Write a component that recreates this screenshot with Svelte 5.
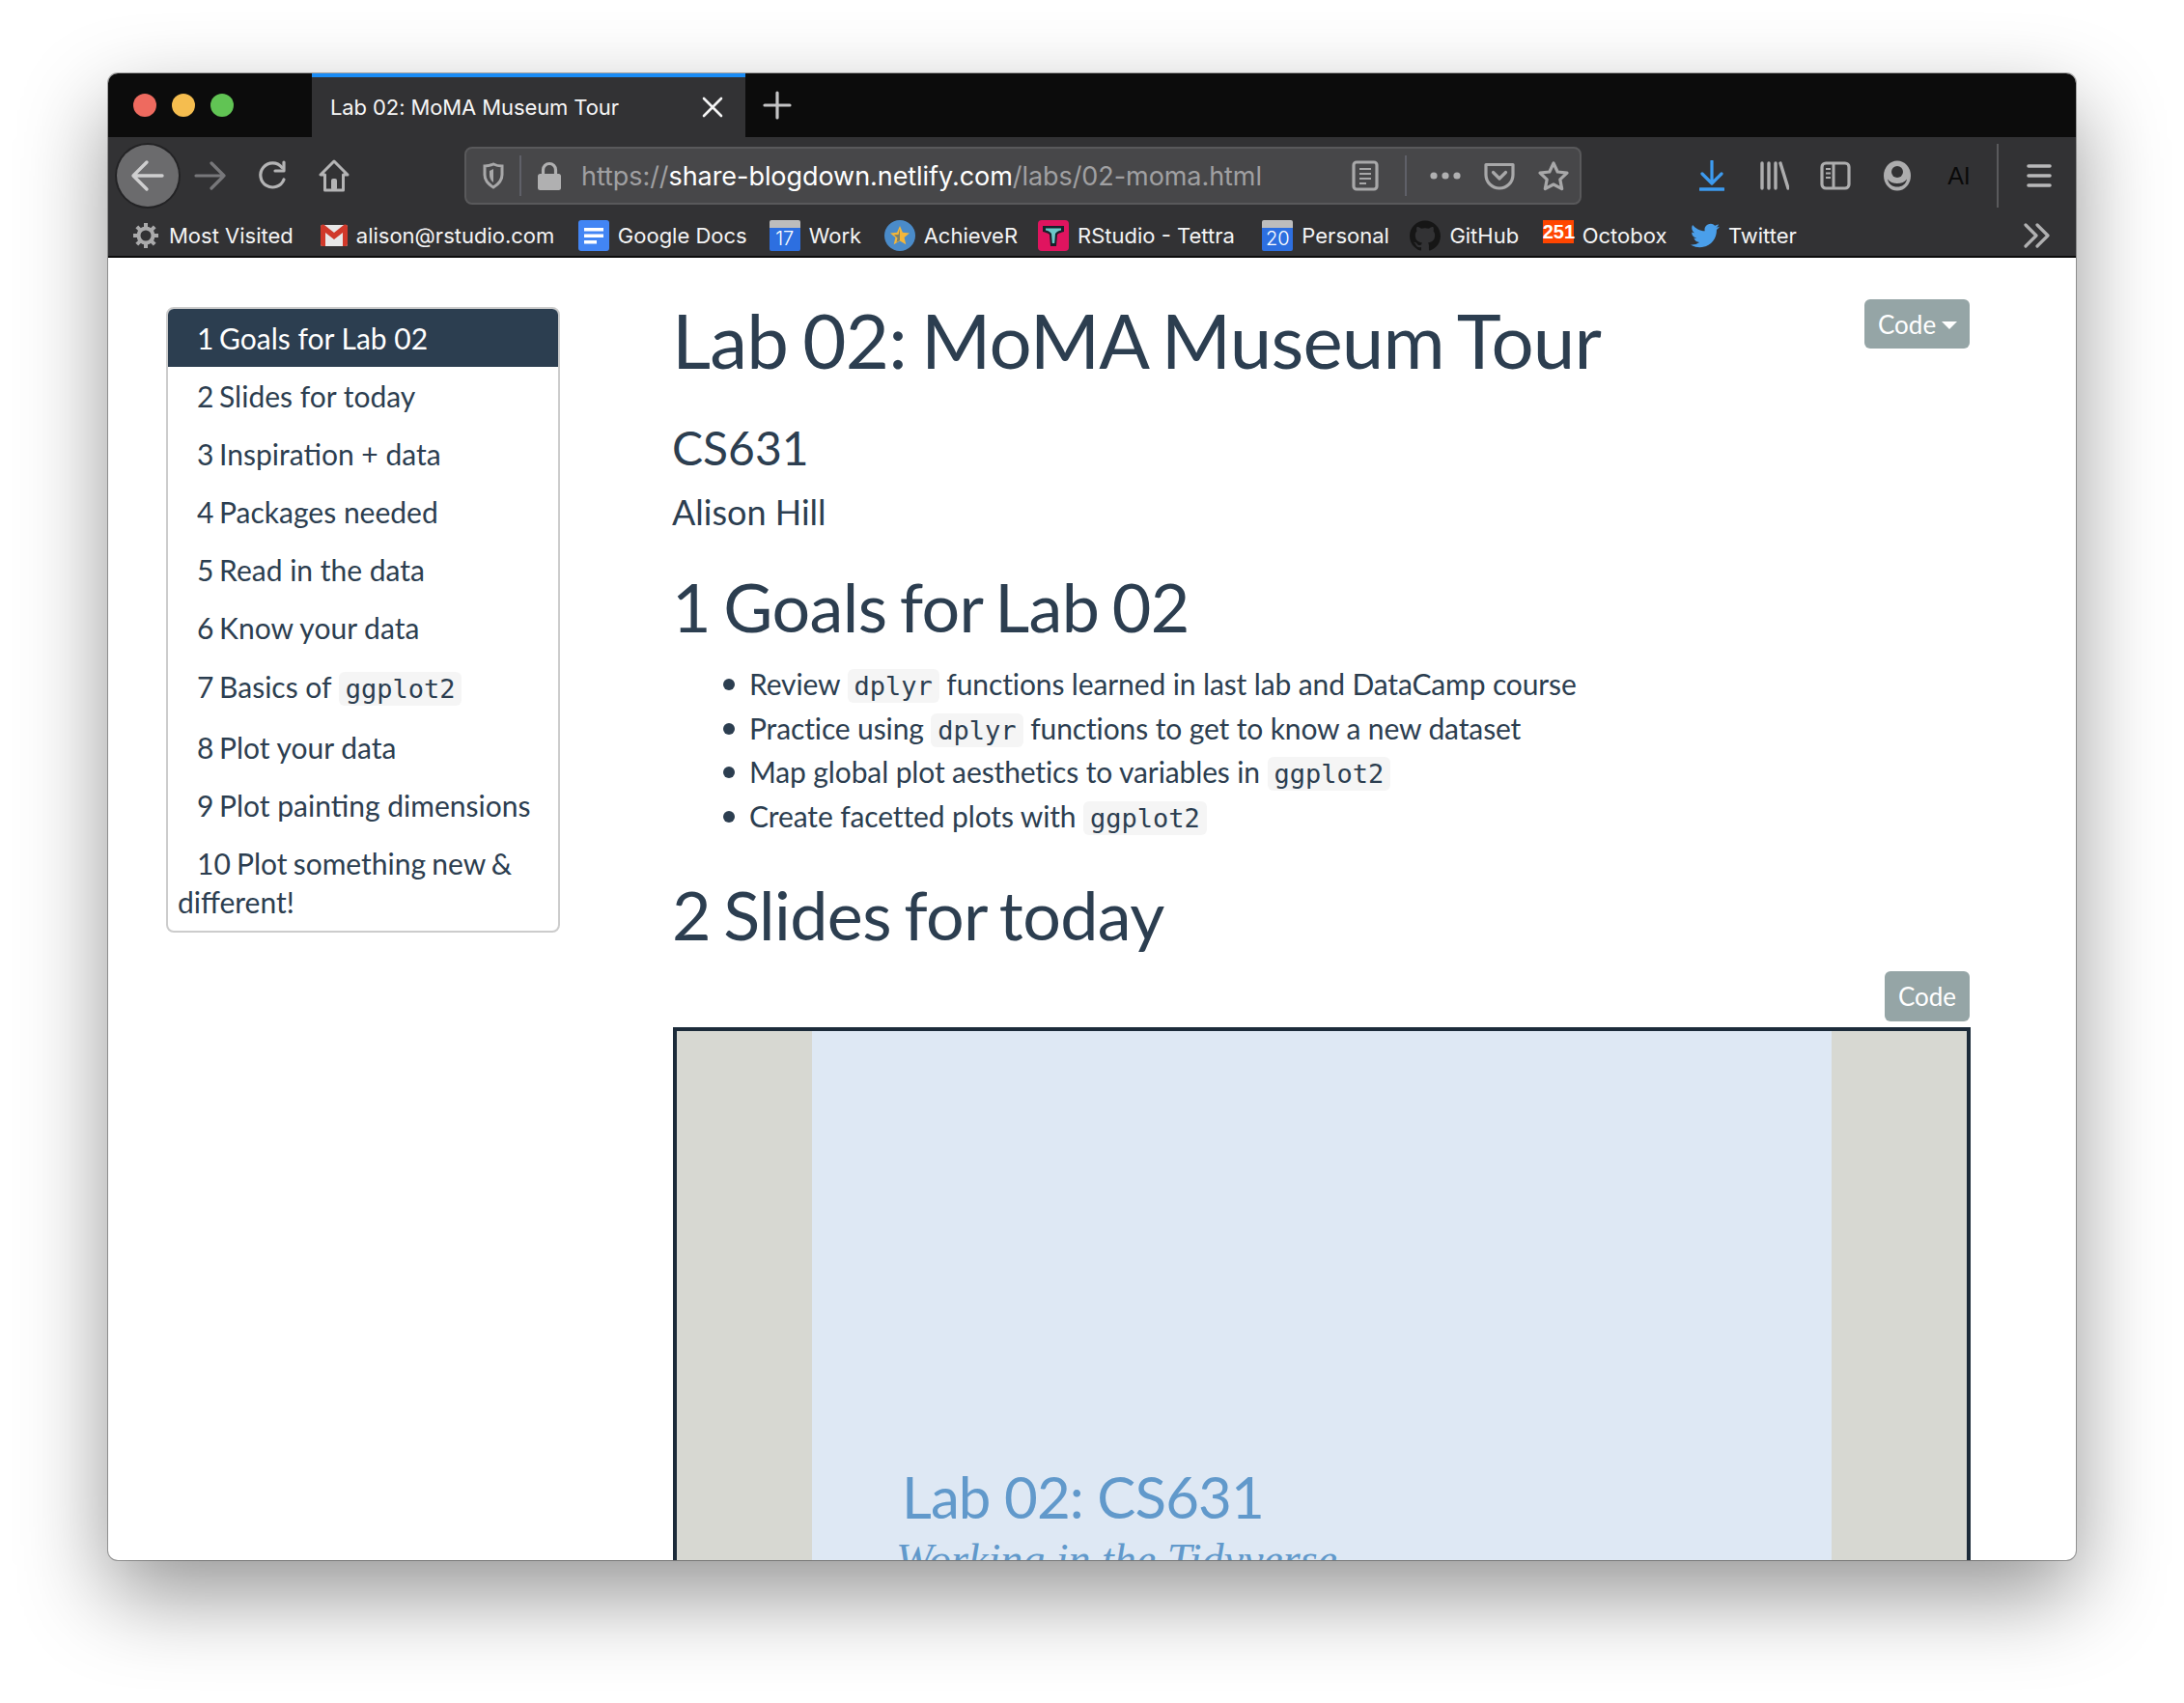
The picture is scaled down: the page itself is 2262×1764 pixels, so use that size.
<script>
  const toc = [
    { n: '2', t: 'Slides for today' },
    { n: '3', t: 'Inspiration + data' },
    { n: '4', t: 'Packages needed' },
    { n: '5', t: 'Read in the data' },
    { n: '6', t: 'Know your data' }
  ];
  const tocRest = [
    { n: '8', t: 'Plot your data' },
    { n: '9', t: 'Plot painting dimensions' }
  ];
</script>

<div class="window">
  <div class="tabstrip">
    <div class="lights">
      <span class="light red"></span>
      <span class="light yellow"></span>
      <span class="light green"></span>
    </div>
    <div class="tab">
      <span class="tab-title">Lab 02: MoMA Museum Tour</span>
      <svg class="tab-x" width="24" height="24" viewBox="0 0 24 24"><path d="M3 3l18 18M21 3L3 21" stroke="#f4f4f4" stroke-width="2.6" stroke-linecap="round"/></svg>
    </div>
    <svg class="plus" width="30" height="30" viewBox="0 0 30 30"><path d="M15 2v26M2 15h26" stroke="#c4c4c5" stroke-width="3.2" stroke-linecap="round"/></svg>
  </div>

  <div class="toolbar">
    <div class="slot back">
      <span class="back-circle">
        <svg width="36" height="36" viewBox="0 0 36 36" fill="none"><path d="M33 18H4M17 4L3 18l14 14" stroke="#cfcfd0" stroke-width="3.4" stroke-linecap="round" stroke-linejoin="round"/></svg>
      </span>
    </div>
    <div class="slot">
      <svg width="34" height="30" viewBox="0 0 34 30" fill="none"><path d="M2 15h29M18 2l13 13-13 13" stroke="#77777a" stroke-width="3.2" stroke-linecap="round" stroke-linejoin="round"/></svg>
    </div>
    <div class="slot">
      <svg width="32" height="32" viewBox="0 0 32 32" fill="none"><path d="M27 20a12.5 12.5 0 1 1-2-12.5" stroke="#b4b4b5" stroke-width="3.2" stroke-linecap="round"/><path d="M27 2v9h-9" stroke="#b4b4b5" stroke-width="3.2" stroke-linecap="round" stroke-linejoin="round"/></svg>
    </div>
    <div class="slot home">
      <svg width="32" height="34" viewBox="0 0 32 34" fill="none"><path d="M16 2L2 16h4.500v16h19V16H30z" stroke="#b4b4b5" stroke-width="3" stroke-linejoin="round"/><rect x="13" y="20" width="6" height="12" rx="2" fill="#b4b4b5"/></svg>
    </div>

    <div class="urlbar">
      <svg class="shield" width="22" height="28" viewBox="0 0 22 28" fill="none"><path d="M11 2c3 1.500 6 2 9 2v9c0 6-4 10-9 13C6 23 2 19 2 13V4c3 0 6-.5 9-2z" stroke="#a8a8a9" stroke-width="3"/><path d="M11 7v14c-2.500-2-4-4.500-4-8V9z" fill="#a8a8a9"/></svg>
      <span class="url-sep"></span>
      <svg class="lock" width="26" height="30" viewBox="0 0 26 30" fill="none"><path d="M6.500 14V9a6.500 6.500 0 0 1 13 0v5" stroke="#b0b0b1" stroke-width="3.2"/><rect x="1" y="13" width="24" height="17" rx="2.500" fill="#b0b0b1"/></svg>
      <span class="url"><span class="dim">https://</span>share-blogdown.netlify.com<span class="dim">/labs/02-moma.html</span></span>
      <svg class="reader" width="28" height="32" viewBox="0 0 28 32" fill="none"><rect x="2" y="2" width="24" height="28" rx="3" stroke="#a8a8a9" stroke-width="3.2"/><path d="M8 9h12M8 14h12M8 19h12M8 24h7" stroke="#a8a8a9" stroke-width="2"/></svg>
      <span class="url-sep two"></span>
      <svg class="dots" width="32" height="8" viewBox="0 0 32 8"><circle cx="4" cy="4" r="3.600" fill="#b0b0b1"/><circle cx="16" cy="4" r="3.600" fill="#b0b0b1"/><circle cx="28" cy="4" r="3.600" fill="#b0b0b1"/></svg>
      <svg class="pocket" width="32" height="30" viewBox="0 0 32 30" fill="none"><path d="M2 3.500h28V14a14 14 0 0 1-28 0z" stroke="#a8a8a9" stroke-width="3.2" stroke-linejoin="round"/><path d="M9.500 11.500L16 18l6.500-6.500" stroke="#a8a8a9" stroke-width="3.2" stroke-linecap="round" stroke-linejoin="round"/></svg>
      <svg class="star" width="34" height="32" viewBox="0 0 34 32" fill="none"><path d="M17 3l4.200 9 9.800 1.200-7.200 6.700 1.900 9.700L17 25l-8.700 4.600 1.900-9.700L3 13.200 12.800 12z" stroke="#a8a8a9" stroke-width="3.200" stroke-linejoin="round"/></svg>
    </div>

    <div class="right-tools">
      <div class="slot">
        <svg width="26" height="32" viewBox="0 0 26 32" fill="none"><path d="M13 1v22M3 14l10 10 10-10" stroke="#3d9bf0" stroke-width="3.200" stroke-linecap="round" stroke-linejoin="round"/><path d="M1 30h24" stroke="#3d9bf0" stroke-width="3.400" stroke-linecap="round"/></svg>
      </div>
      <div class="slot">
        <svg width="32" height="30" viewBox="0 0 32 30" fill="none"><path d="M4 2v26M11 2v26M18 2v26M23 2l8 26" stroke="#adadae" stroke-width="3.400" stroke-linecap="round"/></svg>
      </div>
      <div class="slot">
        <svg width="32" height="30" viewBox="0 0 32 30" fill="none"><rect x="2" y="2" width="28" height="26" rx="4" stroke="#adadae" stroke-width="3.200"/><path d="M14 2v26" stroke="#adadae" stroke-width="3"/><path d="M6 8h5M6 12.500h5M6 17h5" stroke="#adadae" stroke-width="2"/></svg>
      </div>
      <div class="slot">
        <svg width="30" height="32" viewBox="0 0 30 32"><ellipse cx="15" cy="16" rx="14" ry="15.500" fill="#adadae"/><circle cx="15" cy="12" r="6" fill="#323234"/><path d="M5 19.500c2 3 6 4.500 10 4.500s8-1.500 10-4.500c-1 5.500-5 8-10 8s-9-2.500-10-8z" fill="#323234"/></svg>
      </div>
      <div class="slot"><span class="ai">AI</span></div>
    </div>
    <span class="tool-sep"></span>
    <div class="slot">
      <svg width="26" height="26" viewBox="0 0 26 26" fill="none"><path d="M2 3h22M2 13h22M2 23h22" stroke="#b8b8b9" stroke-width="3.600" stroke-linecap="round"/></svg>
    </div>
  </div>

  <div class="bookmarks">
    <div class="bm gear">
      <svg width="28" height="28" viewBox="0 0 28 28" fill="none"><circle cx="14" cy="14" r="7.500" stroke="#aaaaab" stroke-width="4"/><path d="M14 1v5M14 22v5M1 14h5M22 14h5M4.800 4.800l3.500 3.500M19.700 19.700l3.500 3.500M23.200 4.800l-3.500 3.500M8.300 19.700l-3.500 3.500" stroke="#aaaaab" stroke-width="4"/></svg>
      <span>Most Visited</span>
    </div>
    <div class="bm gmail">
      <svg width="28" height="32" viewBox="0 0 28 32"><rect x="0" y="5" width="28" height="22" rx="2" fill="#e8e8e8"/><path d="M0 7v18a2 2 0 0 0 2 2h3V13l9 7 9-7v14h3a2 2 0 0 0 2-2V7c0-2-2-3-4-2L14 13 4 5C2 4 0 5 0 7z" fill="#d0392b"/></svg>
      <span>alison@rstudio.com</span>
    </div>
    <div class="bm docs">
      <svg width="32" height="32" viewBox="0 0 32 32"><rect width="32" height="32" rx="3" fill="#4285f4"/><path d="M6 8h20v3.500H6zM6 14.500h20V18H6zM6 21h13v3.500H6z" fill="#fff"/></svg>
      <span>Google Docs</span>
    </div>
    <div class="bm cal">
      <span class="cal-icon">17</span>
      <span>Work</span>
    </div>
    <div class="bm achiever">
      <svg width="32" height="32" viewBox="0 0 32 32"><circle cx="16" cy="16" r="16" fill="#4a8bc9"/><path d="M16 6l2.900 6.800 7.100.6-5.400 4.700 1.700 7.100-6.300-3.800-6.300 3.800 1.700-7.100L6 13.400l7.100-.6z" fill="#f3b63a"/><path d="M16 9v12l-3.500 2 1-4.500L10 15.300l4.500-.3z" fill="#2f5d8a" opacity=".6"/></svg>
      <span>AchieveR</span>
    </div>
    <div class="bm tettra">
      <svg width="32" height="32" viewBox="0 0 32 32"><rect width="32" height="32" rx="4" fill="#e0145f"/><path d="M5 6h22v6c-3 1-5 1-7 3l-1 12h-6l-1-12c-2-2-4-2-7-3z" fill="#16222a"/><path d="M8 8.500h16v2c-3 .7-4.500 1.500-6 3.500l-.8 10h-2.400L14 14c-1.500-2-3-2.800-6-3.500z" fill="#6cc8c8"/></svg>
      <span>RStudio - Tettra</span>
    </div>
    <div class="bm cal twenty">
      <span class="cal-icon">20</span>
      <span>Personal</span>
    </div>
    <div class="bm github">
      <svg width="32" height="32" viewBox="0 0 24 24"><path fill="#161616" d="M12 .297c-6.630 0-12 5.373-12 12 0 5.303 3.438 9.800 8.205 11.385.6.113.82-.258.82-.577 0-.285-.01-1.040-.015-2.040-3.338.724-4.042-1.610-4.042-1.610C4.422 18.070 3.633 17.700 3.633 17.700c-1.087-.744.084-.729.084-.729 1.205.084 1.838 1.236 1.838 1.236 1.070 1.835 2.809 1.305 3.495.998.108-.776.417-1.305.76-1.605-2.665-.3-5.466-1.332-5.466-5.930 0-1.310.465-2.380 1.235-3.220-.135-.303-.54-1.523.105-3.176 0 0 1.005-.322 3.300 1.230.96-.267 1.980-.399 3-.405 1.020.006 2.040.138 3 .405 2.280-1.552 3.285-1.230 3.285-1.230.645 1.653.24 2.873.12 3.176.765.84 1.230 1.910 1.230 3.220 0 4.610-2.805 5.625-5.475 5.920.42.36.81 1.096.81 2.220 0 1.606-.015 2.896-.015 3.286 0 .315.21.69.825.57C20.565 22.092 24 17.592 24 12.297c0-6.627-5.373-12-12-12"/></svg>
      <span>GitHub</span>
    </div>
    <div class="bm octobox">
      <span class="badge">251</span>
      <span>Octobox</span>
    </div>
    <div class="bm twitter">
      <svg width="30" height="30" viewBox="0 0 24 24"><path fill="#4a9fea" d="M23.953 4.570a10 10 0 0 1-2.825.775 4.958 4.958 0 0 0 2.163-2.723c-.951.555-2.005.959-3.127 1.184a4.920 4.920 0 0 0-8.384 4.482C7.690 8.095 4.067 6.130 1.640 3.162a4.822 4.822 0 0 0-.666 2.475c0 1.710.87 3.213 2.188 4.096a4.904 4.904 0 0 1-2.228-.616v.06a4.923 4.923 0 0 0 3.946 4.827 4.996 4.996 0 0 1-2.212.085 4.936 4.936 0 0 0 4.604 3.417 9.867 9.867 0 0 1-6.102 2.105c-.39 0-.779-.023-1.170-.067a13.995 13.995 0 0 0 7.557 2.209c9.053 0 13.998-7.496 13.998-13.985 0-.21 0-.42-.015-.63A9.935 9.935 0 0 0 24 4.590z"/></svg>
      <span>Twitter</span>
    </div>
    <svg class="more" width="28" height="26" viewBox="0 0 28 26" fill="none"><path d="M2 2l11 11L2 24M14 2l11 11-11 11" stroke="#b0b0b1" stroke-width="3.200" stroke-linecap="round" stroke-linejoin="round"/></svg>
  </div>

  <div class="page">
    <nav class="toc">
      <div class="toc-item active"><span class="num">1</span> Goals for Lab 02</div>
      {#each toc as item}
        <div class="toc-item"><span class="num">{item.n}</span> {item.t}</div>
      {/each}
      <div class="toc-item with-code"><span class="num">7</span> Basics of <code>ggplot2</code></div>
      {#each tocRest as item}
        <div class="toc-item"><span class="num">{item.n}</span> {item.t}</div>
      {/each}
      <div class="toc-item last">10 Plot something new &amp; different!</div>
    </nav>

    <main class="content">
      <button class="btn top-code">Code <span class="caret"></span></button>
      <h1>Lab 02: MoMA Museum Tour</h1>
      <h3>CS631</h3>
      <h4>Alison Hill</h4>
      <h2>1 Goals for Lab 02</h2>
      <ul>
        <li>Review <code>dplyr</code> functions learned in last lab and DataCamp course</li>
        <li>Practice using <code>dplyr</code> functions to get to know a new dataset</li>
        <li>Map global plot aesthetics to variables in <code>ggplot2</code></li>
        <li>Create facetted plots with <code>ggplot2</code></li>
      </ul>
      <h2 class="second">2 Slides for today</h2>
      <div class="code-row"><button class="btn">Code</button></div>
      <div class="frame">
        <div class="slide">
          <div class="slide-title">Lab 02: CS631</div>
          <div class="slide-sub">Working in the Tidyverse</div>
        </div>
      </div>
    </main>
  </div>
</div>

<style>
  :global(body) {
    background: #fff;
  }
  .window {
    width: 2038px;
    height: 1540px;
    margin: 76px 112px 148px;
    border-radius: 10px;
    overflow: hidden;
    background: #fff;
    box-shadow: 0 36px 90px rgba(0, 0, 0, 0.42), 0 0 0 1px rgba(0, 0, 0, 0.3);
    font-family: 'Lato', sans-serif;
    display: flex;
    flex-direction: column;
  }
  .tabstrip {
    height: 66px;
    background: #0c0c0c;
    display: flex;
    align-items: center;
    flex: none;
  }
  .lights {
    width: 211px;
    padding-left: 26px;
    box-sizing: border-box;
    display: flex;
    gap: 16px;
  }
  .light {
    width: 24px;
    height: 24px;
    border-radius: 50%;
  }
  .red { background: #ee6a5f; }
  .yellow { background: #f5bd4f; }
  .green { background: #61c454; }
  .tab {
    width: 449px;
    height: 66px;
    box-sizing: border-box;
    background: #323234;
    border-top: 4px solid #1a8cf5;
    display: flex;
    align-items: center;
    padding: 0 22px 0 19px;
    justify-content: space-between;
    color: #f6f6f6;
    font-family: 'Inter', sans-serif;
    font-size: 22px;
    letter-spacing: -0.1px;
  }
  .plus {
    margin-left: 18px;
  }
  .toolbar {
    height: 80px;
    background: #323234;
    display: flex;
    align-items: center;
    padding-left: 8px;
    flex: none;
  }
  .slot {
    width: 65px;
    height: 64px;
    display: flex;
    align-items: center;
    justify-content: center;
    flex: none;
  }
  .slot.home svg {
    margin-right: 4px;
  }
  .back-circle {
    width: 64px;
    height: 64px;
    border-radius: 50%;
    background: #6b6b6d;
    box-shadow: 0 0 0 2px #232325;
    display: flex;
    align-items: center;
    justify-content: center;
  }
  .urlbar {
    width: 1157px;
    height: 60px;
    box-sizing: border-box;
    margin-left: 101px;
    background: #474749;
    border: 2px solid #59595b;
    border-radius: 8px;
    display: flex;
    align-items: center;
    flex: none;
  }
  .shield { margin-left: 17px; }
  .url-sep {
    width: 2px;
    height: 42px;
    background: #5f6068;
    margin-left: 16px;
  }
  .lock { margin-left: 16px; }
  .url {
    margin-left: 20px;
    font-family: 'Inter', sans-serif;
    font-size: 27px;
    letter-spacing: -0.06px;
    color: #fff;
    width: 780px;
    white-space: nowrap;
  }
  .dim { color: #a0a0a2; }
  .reader { margin-left: 18px; }
  .url-sep.two { margin-left: 27px; }
  .dots { margin-left: 24px; }
  .pocket { margin-left: 24px; }
  .star { margin-left: 23px; }
  .right-tools {
    display: flex;
    margin-left: 103px;
  }
  .right-tools .slot { width: 64px; }
  .ai {
    font-family: 'Liberation Sans', sans-serif;
    font-size: 25px;
    color: #0a0a0a;
  }
  .tool-sep {
    width: 2px;
    height: 66px;
    background: #5a5a5c;
    margin-left: 7px;
    margin-right: 9px;
  }
  .bookmarks {
    height: 43px;
    background: #323234;
    border-bottom: 2px solid #0c0c0c;
    display: flex;
    align-items: center;
    padding-left: 25px;
    flex: none;
    color: #f4f4f4;
    font-family: 'Inter', sans-serif;
    font-size: 22px;
    position: relative;
  }
  .bm {
    display: flex;
    align-items: center;
    gap: 9px;
    margin-right: 24.500px;
    white-space: nowrap;
  }
  .bm.gear {
    margin-right: 28px;
    gap: 10px;
  }
  .bm.docs { margin-right: 23px; }
  .bm.cal { margin-right: 23.500px; }
  .bm.achiever { margin-right: 21px; }
  .bm.tettra { margin-right: 28.500px; }
  .bm.twenty { margin-right: 21.500px; }
  .cal-icon {
    width: 32px;
    height: 32px;
    box-sizing: border-box;
    background: linear-gradient(#bdbdbd 0 8px, #2d6fe0 8px);
    color: #fff;
    font-size: 20px;
    font-weight: 300;
    text-align: center;
    line-height: 38px;
    border-radius: 2px;
    display: block;
  }
  .badge {
    width: 32px;
    height: 24px;
    background: #ff4500;
    color: #fff;
    font-family: 'Liberation Sans', sans-serif;
    font-weight: 700;
    font-size: 20px;
    line-height: 24px;
    text-align: center;
    margin-top: -8px;
  }
  .more {
    position: absolute;
    right: 26px;
    top: 9px;
  }
  .page {
    flex: 1;
    min-height: 0;
    display: flex;
    align-items: flex-start;
    padding-left: 60px;
    color: #2c3e50;
  }
  .toc {
    width: 408px;
    flex: none;
    box-sizing: border-box;
    border: 2px solid #ccc;
    border-radius: 8px;
    margin-top: 51px;
    font-size: 30px;
    overflow: hidden;
  }
  .toc-item {
    padding: 9px 10px;
    line-height: 42px;
    text-indent: 20px;
  }
  .num {
    letter-spacing: -2px;
  }
  .toc-item.active {
    background: #2c3e50;
    color: #fff;
  }
  .toc-item.with-code {
    padding-top: 10px;
    padding-bottom: 12px;
  }
  .toc-item.last {
    padding-top: 10px;
    padding-bottom: 10px;
    line-height: 40px;
    word-spacing: -1.500px;
  }
  code {
    font-family: 'DejaVu Sans Mono', monospace;
    font-size: 27px;
    line-height: 1;
    background: #f5f5f5;
    color: #2c3e50;
    border-radius: 6px;
    padding: 2px 7px;
    letter-spacing: 0;
  }
  .content {
    width: 1344px;
    margin-left: 116px;
    padding-top: 43px;
    flex: none;
  }
  .btn {
    background: #95a5a6;
    color: #fff;
    border: none;
    border-radius: 6px;
    font-family: 'Lato', sans-serif;
    font-size: 26px;
    height: 51px;
    padding: 0 14px;
    display: inline-flex;
    align-items: center;
  }
  .top-code {
    float: right;
    width: 109px;
    gap: 6px;
  }
  .caret {
    width: 0;
    height: 0;
    border-left: 8px solid transparent;
    border-right: 8px solid transparent;
    border-top: 8px solid #fff;
    margin-top: 2px;
  }
  h1, h2, h3, h4 {
    font-weight: 400;
    margin: 0;
  }
  h1 {
    font-size: 78px;
    line-height: 86px;
    letter-spacing: -0.8px;
    word-spacing: -4px;
    margin-top: -1px;
  }
  h3 {
    font-size: 48px;
    line-height: 54px;
    margin-top: 42px;
  }
  h4 {
    font-size: 36px;
    line-height: 42px;
    margin-top: 18px;
  }
  h2 {
    font-size: 70px;
    line-height: 78px;
    margin-top: 38px;
    letter-spacing: -0.6px;
    word-spacing: -4px;
  }
  h2.second {
    margin-top: 40px;
  }
  ul {
    margin: 19px 0 0;
    padding-left: 80px;
    font-size: 30px;
    line-height: 45.500px;
    letter-spacing: -0.12px;
    list-style: none;
  }
  li::before {
    content: '';
    display: inline-block;
    width: 12px;
    height: 12px;
    border-radius: 50%;
    background: #2c3e50;
    margin-left: -27px;
    margin-right: 15px;
    vertical-align: 5px;
  }
  .code-row {
    display: flex;
    justify-content: flex-end;
    margin-top: 20px;
  }
  .code-row .btn {
    width: 88px;
    justify-content: center;
    padding: 0;
    height: 52px;
  }
  .frame {
    margin: 6px -1px 0 1px;
    height: 600px;
    box-sizing: border-box;
    border: 4px solid #1c2b3a;
    border-bottom: none;
    background: #d7d8d2;
    padding: 0 140px;
    overflow: hidden;
  }
  .slide {
    height: 100%;
    background: #dee8f4;
    padding-left: 93px;
    padding-top: 446px;
    box-sizing: border-box;
    color: #6199cb;
    overflow: hidden;
  }
  .slide-title {
    font-size: 60px;
    line-height: 72px;
    letter-spacing: -0.9px;
  }
  .slide-sub {
    font-family: 'Liberation Serif', serif;
    font-style: italic;
    font-size: 46px;
    line-height: 60px;
    margin-left: -6px;
    white-space: nowrap;
  }
</style>
